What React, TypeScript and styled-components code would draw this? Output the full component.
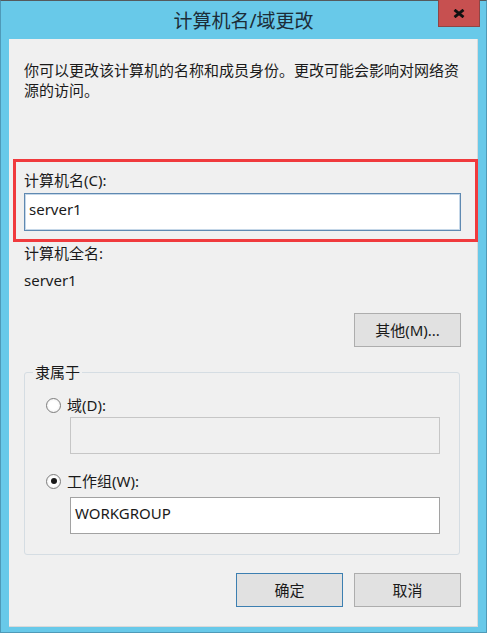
import styled, { createGlobalStyle } from 'styled-components';

const GlobalStyle = createGlobalStyle`
  html, body { margin: 0; padding: 0; background: #ffffff; }
  body { font-family: "Noto Sans", "Noto Sans CJK SC", sans-serif; }
`;

const FONT = `"Noto Sans", "Noto Sans CJK SC", sans-serif`;

const Window = styled.div`
  width: 487px;
  height: 633px;
  box-sizing: border-box;
  display: flex;
  flex-direction: column;
  background: #68c9e9;
  border: 1px solid #4f9ab8;
  border-top-color: #555a5d;
  font-family: ${FONT};
  color: #1a1a1a;
`;

const TitleBar = styled.div`
  height: 38px;
  flex-shrink: 0;
  display: grid;
  grid-template-columns: 1fr auto 1fr;
  align-items: center;
`;

const Title = styled.div`
  grid-column: 2;
  font-size: 19px;
  line-height: 24px;
  padding-top: 2px;
  color: #1c2d38;
  white-space: nowrap;
`;

const CloseButton = styled.div`
  grid-column: 3;
  justify-self: end;
  align-self: start;
  margin-right: 6px;
  margin-top: -1px;
  width: 42px;
  height: 27px;
  box-sizing: border-box;
  background: #c75050;
  border: 1px solid #8e4545;
  border-top: none;
  display: flex;
  align-items: center;
  justify-content: center;
`;

const Client = styled.div`
  flex: 1;
  margin: 0 8px 5px 8px;
  background: #f0f0f0;
  box-shadow: inset -1px -1px 0 #d9d9d9;
  padding: 21px 17px 20px 15px;
  display: flex;
  flex-direction: column;
  font-size: 15px;
  line-height: 20px;
`;

const Description = styled.div`
  font-size: 15px;
  line-height: 20px;
`;

const Highlight = styled.div`
  margin: 59px -17px 0 -11px;
  border: 3px solid #f03a3d;
  padding: 8px 14px 8px 8px;
`;

const Label = styled.div<{ $top?: number }>`
  margin-top: ${p => p.$top ?? 0}px;
  height: 20px;
`;

const TextBox = styled.div<{ $top?: number; $height?: number; $focus?: boolean; $disabled?: boolean }>`
  margin-top: ${p => p.$top ?? 0}px;
  height: ${p => p.$height ?? 38}px;
  box-sizing: border-box;
  padding: 5px 4px 0 4px;
  background: ${p => (p.$disabled ? '#f0f0f0' : '#ffffff')};
  border: 1px solid ${p => (p.$focus ? '#5f89b1' : p.$disabled ? '#c6c6c6' : '#a2a2a2')};
  box-shadow: ${p => (p.$focus ? 'inset 0 0 0 1px #c5d7e8' : 'none')};
  font-size: 15px;
  line-height: 20px;
`;

const ButtonRow = styled.div<{ $top: number }>`
  margin-top: ${p => p.$top}px;
  display: flex;
  justify-content: flex-end;
  gap: 11px;
`;

const Button = styled.div<{ $default?: boolean }>`
  width: 107px;
  height: 34px;
  box-sizing: border-box;
  background: #e1e1e1;
  border: 1px solid ${p => (p.$default ? '#3c7fb1' : '#adadad')};
  display: flex;
  align-items: center;
  justify-content: center;
  font-size: 15px;
`;

const Group = styled.fieldset`
  margin: 15px 1px 0 0;
  padding: 0;
  min-width: 0;
  border: 1px solid #d5dde3;
  border-radius: 3px;
`;

const Legend = styled.legend`
  margin-left: 8px;
  padding: 0 2px;
  font-size: 15px;
  line-height: 20px;
`;

const GroupBody = styled.div`
  padding: 13px 19px 20px 21px;
  display: flex;
  flex-direction: column;
`;

const RadioRow = styled.div<{ $top?: number }>`
  margin-top: ${p => p.$top ?? 0}px;
  height: 20px;
  display: flex;
  align-items: center;
  gap: 6px;
`;

const RadioCircle = styled.span<{ $checked?: boolean }>`
  width: 15px;
  height: 15px;
  box-sizing: border-box;
  border-radius: 50%;
  border: 1px solid #7e7e7e;
  background: radial-gradient(circle, #ffffff 45%, #e6e6e6 100%);
  display: flex;
  align-items: center;
  justify-content: center;
  &::after {
    content: '';
    display: ${p => (p.$checked ? 'block' : 'none')};
    width: 6px;
    height: 6px;
    border-radius: 50%;
    background: #1a1a1a;
  }
`;

const Indented = styled.div`
  margin-left: 24px;
  display: flex;
  flex-direction: column;
`;

const App = () => {
  return (
    <>
      <GlobalStyle />
      <Window>
        <TitleBar>
          <Title>计算机名/域更改</Title>
          <CloseButton>
            <svg width="12" height="9" viewBox="0 0 12 9">
              <path d="M1.5 0.8 L10.5 8.2 M10.5 0.8 L1.5 8.2" stroke="#111" strokeWidth="2.8" />
            </svg>
          </CloseButton>
        </TitleBar>
        <Client>
          <Description>你可以更改该计算机的名称和成员身份。更改可能会影响对网络资源的访问。</Description>
          <Highlight>
            <Label>计算机名(C):</Label>
            <TextBox $top={3} $focus>server1</TextBox>
          </Highlight>
          <Label $top={1}>计算机全名:</Label>
          <Label $top={7}>server1</Label>
          <ButtonRow $top={23}>
            <Button>其他(M)...</Button>
          </ButtonRow>
          <Group>
            <Legend>隶属于</Legend>
            <GroupBody>
              <RadioRow>
                <RadioCircle />
                <span>域(D):</span>
              </RadioRow>
              <Indented>
                <TextBox $top={2} $height={37} $disabled />
              </Indented>
              <RadioRow $top={17}>
                <RadioCircle $checked />
                <span>工作组(W):</span>
              </RadioRow>
              <Indented>
                <TextBox $top={6} $height={37}>WORKGROUP</TextBox>
              </Indented>
            </GroupBody>
          </Group>
          <ButtonRow $top={18}>
            <Button $default>确定</Button>
            <Button>取消</Button>
          </ButtonRow>
        </Client>
      </Window>
    </>
  );
};

export default App;
